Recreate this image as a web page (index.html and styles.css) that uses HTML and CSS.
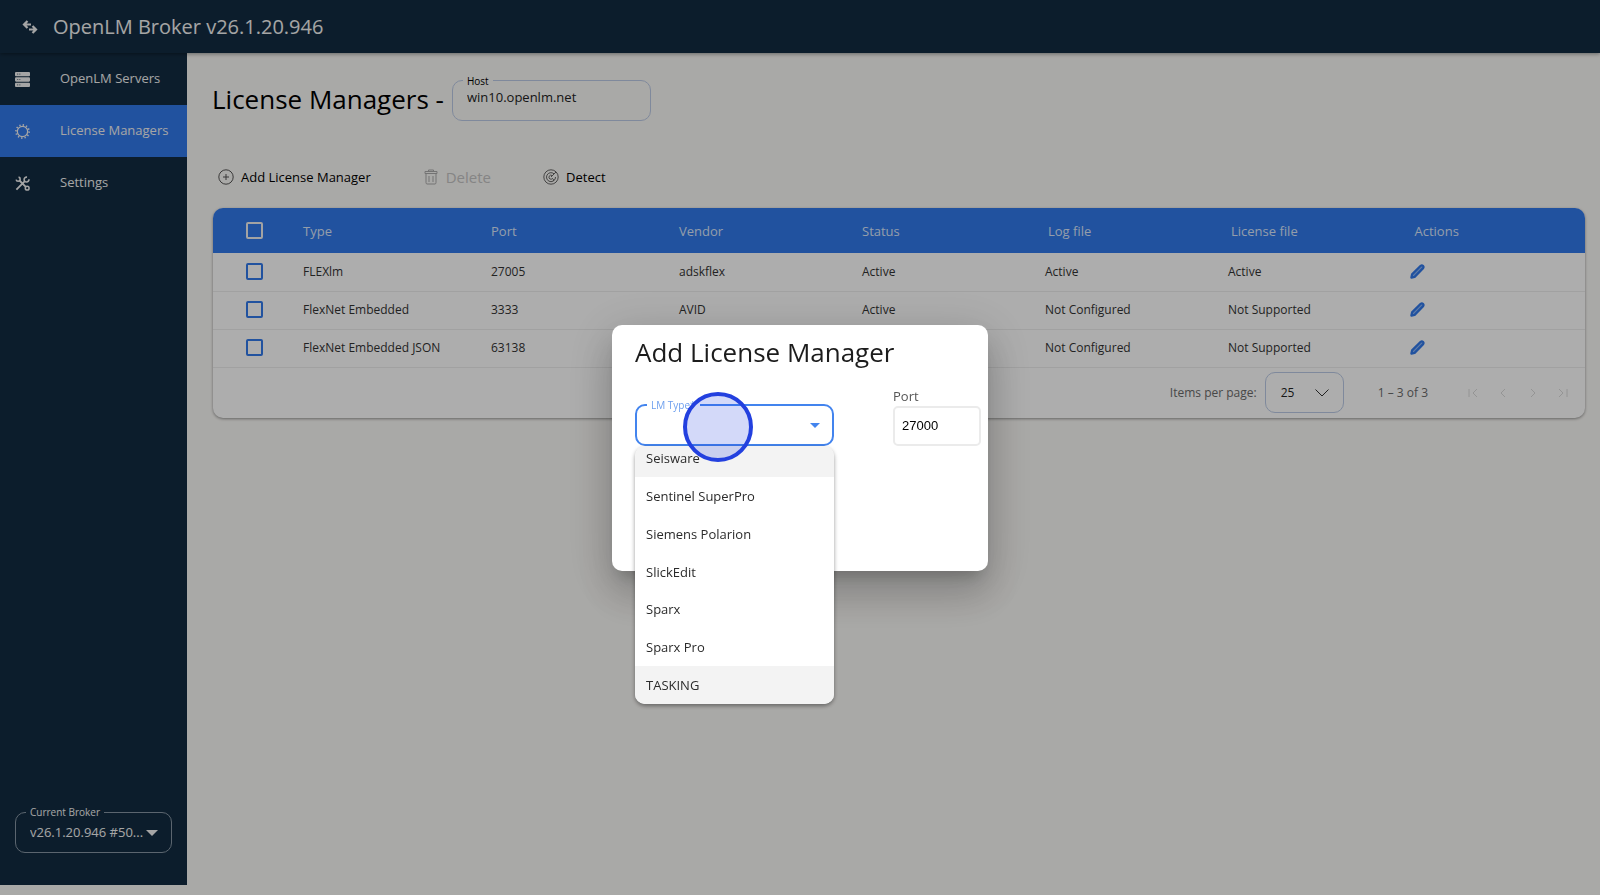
FILE: index.html
```html
<!DOCTYPE html>
<html lang="en">
<head>
<meta charset="utf-8">
<title>OpenLM Broker</title>
<link rel="stylesheet" href="styles.css">
</head>
<body>
<svg class="defs" aria-hidden="true">
  <symbol id="pencil" viewBox="0 0 16 16"><path d="M1.500 14.500l.7-3.400L11.400 1.900q1.300-1 2.400 0t.2 2.500L4.900 13.700z" fill="#8db8f8" stroke="currentColor" stroke-width="2.400" stroke-linejoin="round"/></symbol>
</svg>
<div class="app">
  <header class="topbar">
    <svg class="topbar-icon" viewBox="0 0 16 14" fill="none" stroke="currentColor" stroke-width="2.200"><path d="M5.500 1L2 4.500 5.500 8M2 4.500H9M10.500 6L14 9.500 10.500 13M14 9.500H7"/></svg>
    <span class="topbar-title">OpenLM Broker v26.1.20.946</span>
  </header>
  <div class="body">
    <aside class="sidebar">
      <nav class="nav">
        <a class="nav-item" href="#servers">
          <svg class="nav-icon" viewBox="0 0 14 14"><g fill="currentColor"><rect y="0" width="14" height="4" rx="1"/><rect y="5" width="14" height="4" rx="1"/><rect y="10" width="14" height="4" rx="1"/></g><path d="M2 2h1M4 2h1M2 7h1M4 7h1M2 12h1M4 12h1" stroke="#6d7c89"/></svg>
          <span>OpenLM Servers</span>
        </a>
        <a class="nav-item nav-item-active" href="#managers">
          <svg class="nav-icon" viewBox="0 0 16 16" fill="none" stroke="currentColor"><circle cx="8" cy="8" r="5.500" stroke-width="1.300"/><circle cx="8" cy="8" r="7" stroke-width="1.800" stroke-dasharray="1.400 2.265"/></svg>
          <span>License Managers</span>
        </a>
        <a class="nav-item" href="#settings">
          <svg class="nav-icon" viewBox="0 0 16 16" fill="none" stroke="currentColor"><path d="M4.800 4.800l6.700 6.700M1.500 14.500L10.500 5.500" stroke-width="1.900"/><path d="M1.200 3.800A2.200 2.200 0 1 0 3.800 1.200M12.800 1.200A2.600 2.600 0 1 0 14.900 3.500" stroke-width="1.700"/><circle cx="13" cy="13" r="2" stroke-width="1.600"/></svg>
          <span>Settings</span>
        </a>
      </nav>
      <fieldset class="outline broker">
        <legend><label for="broker">Current Broker</label></legend>
        <select id="broker" class="broker-select"><option>v26.1.20.946 #50...</option></select>
        <svg class="caret" viewBox="0 0 12 6"><path d="M0 0h12L6 6z" fill="currentColor"/></svg>
      </fieldset>
    </aside>
    <main class="content">
      <div class="heading">
        <h1>License Managers -</h1>
        <fieldset class="outline host">
          <legend><label for="host">Host</label></legend>
          <input id="host" class="host-input" type="text" value="win10.openlm.net">
        </fieldset>
      </div>
      <div class="toolbar">
        <button class="tool" type="button">
          <svg viewBox="0 0 16 16" fill="none" stroke="currentColor"><circle cx="8" cy="8" r="7.200"/><path d="M8 5v6M5 8h6"/></svg>
          Add License Manager
        </button>
        <button class="tool tool-delete" type="button" disabled>
          <svg viewBox="0 0 16 16" fill="none" stroke="currentColor"><path d="M3 4.500h10v9q0 1.500-1 1.500H4q-1 0-1-1.500zM2 2.500h12v2H2zM5.500 2.500V1h5v1.500M6 7v6M10 7v6"/></svg>
          Delete
        </button>
        <button class="tool" type="button">
          <svg viewBox="0 0 16 16" fill="none" stroke="currentColor" stroke-width=".9"><circle cx="8" cy="8" r="7.200"/><path d="M11 4.800A4.500 4.500 0 1 0 12.500 8M9 6.500A2 2 0 1 0 9.800 9M8 8l5-5"/><circle cx="10.500" cy="11" r=".5"/></svg>
          Detect
        </button>
      </div>
      <section class="card">
        <table class="grid">
          <colgroup><col class="col-check"><col class="col-wide"><col class="col-wide"><col class="col-mid"><col class="col-mid"><col class="col-mid"><col></colgroup>
          <thead>
            <tr><th><input class="tick tick-head" type="checkbox" aria-label="Select all"></th><th>Type</th><th>Port</th><th>Vendor</th><th>Status</th><th class="shift">Log file</th><th class="shift">License file</th><th class="actions">Actions</th></tr>
          </thead>
          <tbody>
            <tr><td><input class="tick" type="checkbox" aria-label="Select FLEXlm"></td><td>FLEXlm</td><td>27005</td><td>adskflex</td><td>Active</td><td>Active</td><td>Active</td><td class="actions"><button class="edit" type="button" aria-label="Edit"><svg><use href="#pencil"/></svg></button></td></tr>
            <tr><td><input class="tick" type="checkbox" aria-label="Select FlexNet Embedded"></td><td>FlexNet Embedded</td><td>3333</td><td>AVID</td><td>Active</td><td>Not Configured</td><td>Not Supported</td><td class="actions"><button class="edit" type="button" aria-label="Edit"><svg><use href="#pencil"/></svg></button></td></tr>
            <tr><td><input class="tick" type="checkbox" aria-label="Select FlexNet Embedded JSON"></td><td>FlexNet Embedded JSON</td><td>63138</td><td></td><td></td><td>Not Configured</td><td>Not Supported</td><td class="actions"><button class="edit" type="button" aria-label="Edit"><svg><use href="#pencil"/></svg></button></td></tr>
          </tbody>
        </table>
        <div class="pager">
          <label for="size">Items per page:</label>
          <div class="size">
            <select id="size" class="size-select"><option>25</option></select>
            <svg class="chevron" viewBox="0 0 14 8" fill="none" stroke="currentColor"><path d="M.5.5L7 7 13.500.5"/></svg>
          </div>
          <span class="range">1 – 3 of 3</span>
          <div class="pages">
            <button type="button" disabled aria-label="First page"><svg viewBox="0 0 10 10"><path d="M1 1v8M9 1L5 5l4 4"/></svg></button>
            <button type="button" disabled aria-label="Previous page"><svg viewBox="0 0 10 10"><path d="M7 1L3 5l4 4"/></svg></button>
            <button type="button" disabled aria-label="Next page"><svg viewBox="0 0 10 10"><path d="M3 1l4 4-4 4"/></svg></button>
            <button type="button" disabled aria-label="Last page"><svg viewBox="0 0 10 10"><path d="M1 1l4 4-4 4M9 1v8"/></svg></button>
          </div>
        </div>
      </section>
    </main>
  </div>
</div>
<div class="scrim">
  <div class="dialog" role="dialog" aria-labelledby="dialog-title">
    <h2 id="dialog-title">Add License Manager</h2>
    <div class="form">
      <div class="type-field">
        <fieldset class="outline type">
          <legend><label for="type">LM Type*</label></legend>
          <select id="type" class="type-select"><option></option></select>
          <svg class="caret" viewBox="0 0 10 5"><path d="M0 0h10L5 5z" fill="currentColor"/></svg>
        </fieldset>
        <div class="menu">
          <ul class="options" role="listbox" aria-label="LM Type">
            <li class="marked" role="option">Seisware</li>
            <li role="option">Sentinel SuperPro</li>
            <li role="option">Siemens Polarion</li>
            <li role="option">SlickEdit</li>
            <li role="option">Sparx</li>
            <li role="option">Sparx Pro</li>
            <li class="marked" role="option">TASKING</li>
          </ul>
        </div>
        <span class="pointer"></span>
      </div>
      <div class="port">
        <label for="port">Port</label>
        <input id="port" type="text" value="27000">
      </div>
    </div>
  </div>
</div>
</body>
</html>
```

FILE: styles.css
```css
* { box-sizing: border-box; }
body, input, select, button {
  font-family: "Open Sans", "Noto Sans", sans-serif;
  font-size: 13px;
}
body { margin: 0; background: #faf9f6; color: #000; }
h1, h2 { margin: 0; font-size: 26px; font-weight: 500; }
button { padding: 0; border: 0; background: none; color: inherit; }
select, input { appearance: none; margin: 0; color: inherit; }
.defs { position: absolute; width: 0; height: 0; }

.app { display: flex; flex-direction: column; min-height: 100vh; }
.topbar {
  display: flex;
  align-items: center;
  gap: 15px;
  height: 53px;
  padding: 0 22px;
  background: #132c42;
  color: #f4f4f4;
  box-shadow: 0 1px 4px rgba(0, 0, 0, .4);
  z-index: 1;
}
.topbar-icon { width: 16px; height: 14px; }
.topbar-title { padding-bottom: 1px; font-size: 20px; }
.body { display: flex; flex: 1; }

.sidebar {
  display: flex;
  flex-direction: column;
  justify-content: space-between;
  flex: none;
  width: 187px;
  margin-bottom: 10px;
  padding-bottom: 32px;
  background: #132c42;
  color: #f4f4f4;
}
.nav-item {
  display: flex;
  align-items: center;
  gap: 30px;
  height: 52px;
  padding-left: 15px;
  color: inherit;
  text-decoration: none;
  white-space: nowrap;
}
.nav-item span { padding-bottom: 2px; }
.nav-item-active { background: #3179eb; }
.nav-icon { width: 15px; height: 15px; }

.outline {
  display: flex;
  align-items: center;
  position: relative;
  min-width: 0;
  margin: 0;
  padding: 0 14px;
  border: 1px solid #bccbe6;
  border-radius: 10px;
}
.outline legend {
  height: 14px;
  margin-left: -4px;
  padding: 0 4px;
  font-size: 10px;
  line-height: 14px;
}
.outline input, .outline select {
  width: 100%;
  padding: 0;
  border: 0;
  outline: 0;
  background: none;
}
.broker { margin: 0 15px; height: 48px; border-color: #8796a4; }
.broker .broker-select { height: 26px; margin-bottom: 8px; }
.caret { position: absolute; }
.broker .caret { right: 13px; top: 11px; width: 12px; height: 6px; }

.content { flex: 1; min-width: 0; padding: 20px 15px 20px 25px; }
.heading { display: flex; align-items: center; gap: 8px; }
.heading h1 { line-height: 52px; }
.host { width: 199px; height: 47px; margin-bottom: 4px; }
.host .host-input { height: 18px; margin-bottom: 14px; color: #222; }

.toolbar { display: flex; align-items: center; gap: 52px; height: 32px; margin-top: 36px; padding-left: 6px; }
.tool { display: flex; align-items: center; gap: 7px; font-weight: 500; }
.tool svg { width: 16px; height: 16px; color: #555; }
.tool-delete { color: #c4c4c4; font-size: 15px; font-weight: 400; }
.tool-delete svg { color: #aaa; }

.card {
  margin: 15px 0 0 1px;
  border-radius: 10px;
  background: #fff;
  box-shadow: 0 1px 3px rgba(0, 0, 0, .4);
  overflow: hidden;
}
.grid { width: 100%; border-collapse: collapse; table-layout: fixed; color: #333; }
.grid th, .grid td { padding: 0; text-align: left; font-weight: 400; }
.grid th { height: 45px; background: #3179eb; color: #dbe7fb; }
.grid td { height: 38px; padding-bottom: 1px; border-bottom: 1px solid #ededed; font-size: 12px; }
.grid th.shift { padding-left: 3px; }
.grid th.actions { padding-left: 8px; }
.grid td.actions { padding-left: 3px; }
.col-check { width: 90px; }
.col-wide { width: 188px; }
.col-mid { width: 183px; }
.tick {
  display: block;
  width: 17px;
  height: 17px;
  margin-left: 33px;
  border: 2px solid #3179eb;
  border-radius: 2px;
}
.tick-head { border-color: #f0f0f0; }
.edit { display: block; color: #3179eb; }
.edit svg { display: block; width: 15px; height: 15px; }

.pager {
  display: flex;
  align-items: center;
  justify-content: flex-end;
  height: 50px;
  padding-right: 7px;
  color: #6b6b6b;
  font-size: 12px;
}
.size { position: relative; margin-left: 8px; }
.size-select {
  display: block;
  width: 79px;
  height: 41px;
  padding: 0 15px;
  border: 1px solid #bccbe6;
  border-radius: 10px;
  background: none;
  color: #222;
  font-size: 12px;
}
.chevron { position: absolute; right: 15px; top: 17px; width: 14px; height: 8px; color: #333; }
.range { margin: 0 30px 0 34px; }
.pages { display: flex; }
.pages button { width: 30px; height: 30px; }
.pages svg { width: 10px; height: 10px; fill: none; stroke: #dadada; }

.scrim {
  position: fixed;
  inset: 0;
  display: flex;
  align-items: center;
  justify-content: center;
  background: rgba(0, 0, 0, .32);
  z-index: 2;
}
.dialog {
  width: 376px;
  min-height: 246px;
  padding: 7px 7px 8px 23px;
  border-radius: 10px;
  background: #fff;
  box-shadow: 0 11px 15px -7px rgba(0, 0, 0, .2), 0 24px 38px 3px rgba(0, 0, 0, .14), 0 9px 46px 8px rgba(0, 0, 0, .12);
}
.dialog h2 { color: #1c1c1c; line-height: 40px; }
.form { display: flex; justify-content: space-between; align-items: flex-end; margin-top: 14px; }
.type-field { position: relative; width: 199px; }
.type { height: 48px; border: 2px solid #4384ee; color: #4384ee; }
.type legend { color: #6d9fee; }
.type .type-select { height: 28px; }
.type .caret { right: 12px; top: 11px; width: 10px; height: 5px; }
.menu {
  position: absolute;
  top: 100%;
  left: 0;
  right: 0;
  display: flex;
  align-items: flex-end;
  height: 258px;
  border-radius: 10px;
  background: #fff;
  box-shadow: 0 2px 4px rgba(0, 0, 0, .4);
  overflow: hidden;
}
.options {
  display: flex;
  flex: 1;
  flex-direction: column;
  height: 264px;
  margin: 0;
  padding: 0;
  list-style: none;
  color: #2b2b2b;
}
.options li { display: flex; flex: 1; align-items: center; padding-left: 11px; }
.options .marked { background: #f3f3f3; }
.pointer {
  position: absolute;
  left: 48px;
  bottom: -16px;
  width: 70px;
  height: 70px;
  border: 4px solid #2340df;
  border-radius: 50%;
  background: rgba(35, 64, 223, .2);
}
.port { width: 88px; }
.port label { display: block; color: #555; line-height: 20px; }
.port input {
  width: 100%;
  height: 40px;
  padding: 0 7px;
  border: 2px solid #ebebeb;
  border-radius: 5px;
  color: #000;
  font-family: "Liberation Sans", sans-serif;
}
```
